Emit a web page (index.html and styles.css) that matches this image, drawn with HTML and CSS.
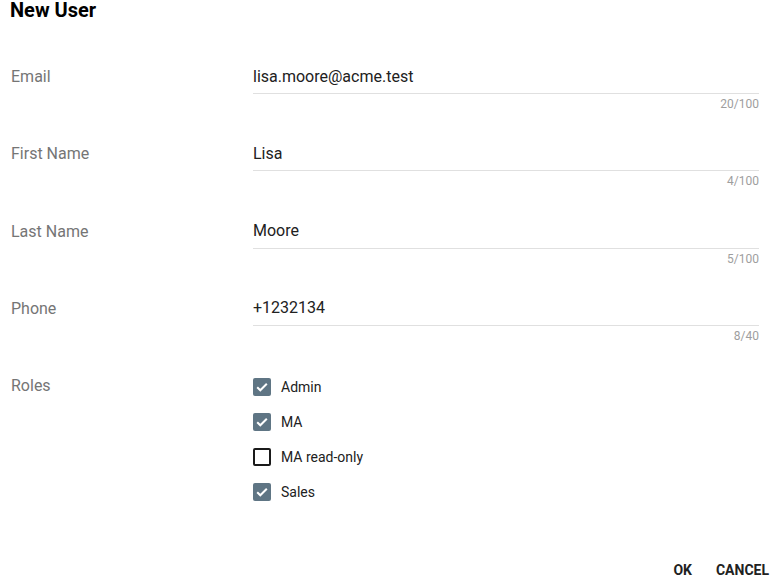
FILE: index.html
```html
<!DOCTYPE html>
<html lang="en">
<head>
    <meta charset="UTF-8">
    <title>New User</title>
    <link rel="stylesheet" href="styles.css">
</head>
<body>
<div class="dialog">
    <h1 class="title">New User</h1>
    <div class="form">
        <div class="field">
            <label for="email">Email</label>
            <div class="control">
                <input type="text" id="email" value="lisa.moore@acme.test">
                <div class="counter">20/100</div>
            </div>
        </div>
        <div class="field">
            <label for="first">First Name</label>
            <div class="control">
                <input type="text" id="first" value="Lisa">
                <div class="counter">4/100</div>
            </div>
        </div>
        <div class="field">
            <label for="last">Last Name</label>
            <div class="control">
                <input type="text" id="last" value="Moore">
                <div class="counter">5/100</div>
            </div>
        </div>
        <div class="field">
            <label for="phone">Phone</label>
            <div class="control">
                <input type="text" id="phone" value="+1232134">
                <div class="counter">8/40</div>
            </div>
        </div>
        <div class="field roles">
            <label>Roles</label>
            <div class="checks">
                <div class="check checked"><span class="box"><svg viewBox="0 0 18 18" width="18" height="18"><path d="M4.2 9.2l3.1 3.1 6.5-6.6" fill="none" stroke="#fff" stroke-width="2"/></svg></span>Admin</div>
                <div class="check checked"><span class="box"><svg viewBox="0 0 18 18" width="18" height="18"><path d="M4.2 9.2l3.1 3.1 6.5-6.6" fill="none" stroke="#fff" stroke-width="2"/></svg></span>MA</div>
                <div class="check"><span class="box"></span>MA read-only</div>
                <div class="check checked"><span class="box"><svg viewBox="0 0 18 18" width="18" height="18"><path d="M4.2 9.2l3.1 3.1 6.5-6.6" fill="none" stroke="#fff" stroke-width="2"/></svg></span>Sales</div>
            </div>
        </div>
    </div>
    <div class="actions">
        <button>OK</button>
        <button>Cancel</button>
    </div>
</div>
</body>
</html>
```

FILE: styles.css
```css
* {
    margin: 0;
    padding: 0;
    box-sizing: border-box;
}

body {
    font-family: Roboto, "Liberation Sans", sans-serif;
    background: #fff;
    color: #212121;
}

.title {
    font-size: 20px;
    font-weight: 700;
    line-height: 21px;
    color: #000;
    padding-left: 10px;
}

.form {
    margin-top: 41px;
    padding: 0 16px 0 11px;
}

.field {
    display: grid;
    grid-template-columns: 242px 1fr;
    margin-bottom: 25.25px;
}

.field label {
    font-size: 16px;
    line-height: 30px;
    color: #757575;
}

.control input {
    display: block;
    width: 100%;
    height: 32px;
    padding-bottom: 3px;
    border: none;
    border-bottom: 1px solid #e0e0e0;
    font-family: inherit;
    font-size: 16px;
    color: #212121;
    outline: none;
    background: transparent;
}

.counter {
    text-align: right;
    font-size: 12px;
    line-height: 20px;
    color: #9e9e9e;
}

.checks {
    margin-top: -2px;
}

.check {
    display: flex;
    align-items: center;
    gap: 10px;
    height: 35px;
    font-size: 14px;
    color: #212121;
}

.box {
    width: 18px;
    height: 18px;
    border: 2px solid #1a1a1a;
    border-radius: 2px;
    display: flex;
}

.check.checked .box {
    border: none;
    background: #5f7584;
}

.actions {
    display: flex;
    justify-content: flex-end;
    gap: 12px;
    margin-top: 43px;
}

.actions button {
    height: 36px;
    padding: 0 6px;
    border: none;
    background: none;
    font-family: inherit;
    font-size: 14px;
    font-weight: 700;
    text-transform: uppercase;
    color: #212121;
    cursor: pointer;
}
```
